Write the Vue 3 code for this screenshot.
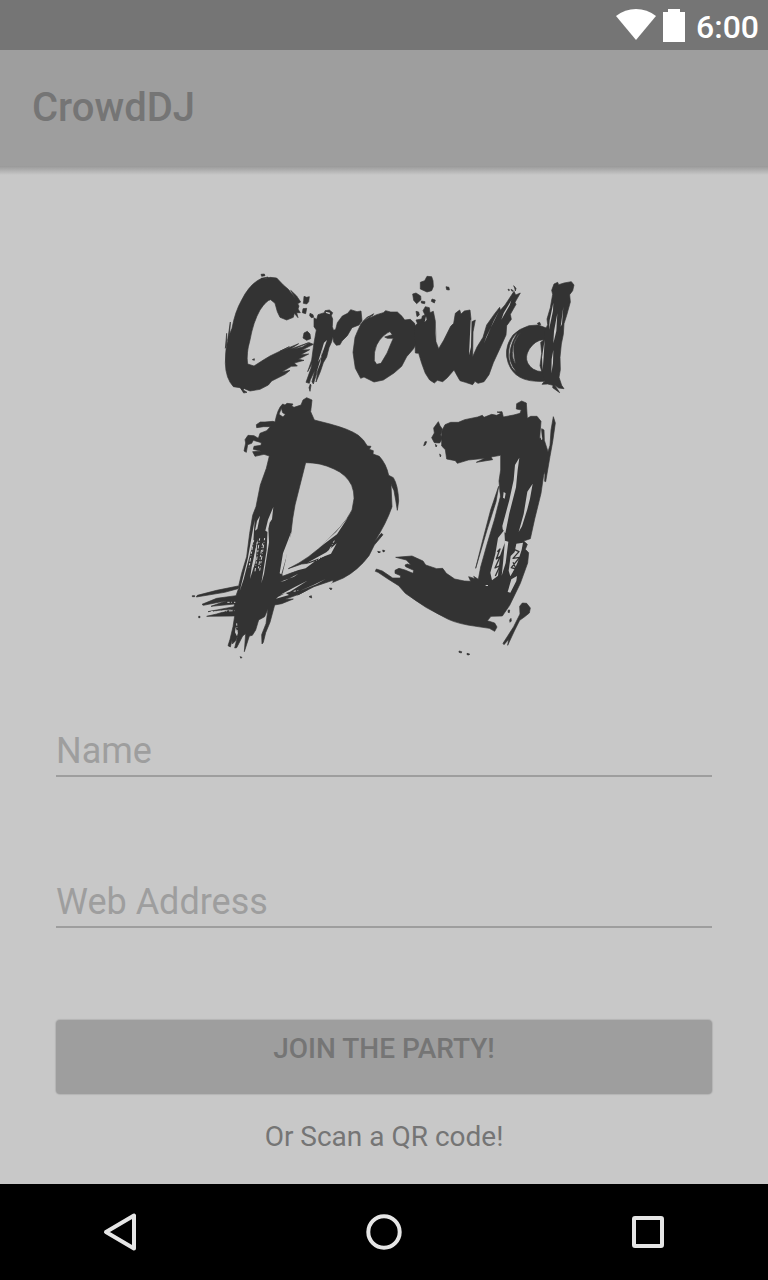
<script setup>
import { ref } from 'vue'

const name = ref('')
const address = ref('')
</script>

<template>
  <div class="screen">
    <div class="status">
      <svg class="wifi" viewBox="0 0 40 32" aria-hidden="true"><path d="M0 7Q9 0 20 0T40 7L20 31Z" /></svg>
      <svg class="battery" viewBox="0 0 22 34" aria-hidden="true"><path d="M5 1H17V4H22V34H0V4H5Z" /></svg>
      <time>6:00</time>
    </div>
    <header class="bar"><h1>CrowdDJ</h1></header>

    <main>
      <svg class="logo" viewBox="567 810 1170 1170" role="img" aria-label="Crowd DJ">
        <g transform="translate(540 780)">
          <path d="M362 126L350 108 332 91 345 113 325 88 310 75 290 54 270 52 258 57 245 55 232 62Q205 80 185 120 165 155 156 205L148 225Q134 270 136 310 137 355 160 380L180 383 187 391 193 386 210 393 240 388 265 375 275 363 315 343 330 331 305 336 334 319 352 318 343 309 372 301 355 298 386 282 362 284 389 269 366 270 400 253 388 248 367 261 340 268 386 248 330 268 356 251 300 274 328 260 270 288 250 300 222 318 203 312Q198 280 210 240 220 185 240 150 260 120 272 119L285 130 292 155 300 172 320 180 340 172 343 160 354 173 350 158 361 158 354 147 357 138 353 131Z" />
          <path d="M243 43l10-1 2 5-10 2zM244 55l20-4 2 4-20 2zM372 109l8 3 8-2-2 15-6 7-10-2 1-8zM369 146l11-1-3 16-10-3zM390 160l9 4 2 8-7 1-5-6zM372 219l10-5 8 8 2 14-12 5-11-7zM151 186l-8 55 3 3 4-38zM140 220l-4 45 4-10zM183 386l18 11-10 2zM217 299l6-3 0 5z" />
          <path d="M402 174L410 178 414 164 433 158 435 152 448 150 458 158 454 167 458 177 457 200 462 215 455 245 447 263 440 291 430 308 421 335 408 366 415 325 400 372 396 365 405 330 391 359 388 370 378 367 393 325 397 309 383 335 395 300 401 255 409 210 402 200ZM456 214L467 208 472 188 487 168 503 160 512 149 531 155 543 153 546 182 537 195 516 203 502 227 486 243 480 254 469 256 461 246ZM387 383l4-11 2 4-3 18z" />
          <path class="light" d="M441 240L432 248 414 306 423 291ZM437 155l13 3-1 5-11-4ZM429 258l-8 52-13 33 14-46Z" />
          <path fill-rule="evenodd" d="M543 191L555 178 581 161 567 175 590 164 610 158 617 152 632 156 652 156 666 169 674 180 691 178 704 190 710 215 710 250 700 267 680 290 665 319 642 339 610 360 582 366 552 351 542 355 526 325 523 305 519 277 525 232 532 215ZM640 210Q605 223 590 255 581 275 583 302L590 313 603 310Q624 279 634 248L640 235 622 235 614 231 637 224 630 215ZM547 188l15-17 18-7-25 17z" />
        </g>
        <g transform="translate(1140 780)">
          <path d="M104 200L112 190 108 180 125 177 127 168 135 165 129 152 136 140 148 143 150 158 160 154 166 184 168 245 176 266 191 241 212 199 221 190 226 160 239 150 243 162 253 153 270 150 274 186 286 180 279 216 278 290 291 261 309 232 320 195 344 161 359 142 361 151 375 135 402 94 407 105 421 99 405 127 408 133 391 163 394 178 380 197 378 225 359 267 340 308 327 344 312 365 294 370 285 364 278 374 256 367 240 362 233 350 222 330 202 353 188 365 172 361 163 369 149 360 136 340 125 310 116 280 106 279Z" />
          <path d="M121 67l13-5 7-13 14 1 4 12 1 18-5 12-14 4-20-9zM98 102l10-3 14 9 1 11-13 12-9-10zM124 123l11 2-1 6-10-2zM156 117l10 3-3 9-9-5zM198 80l9 2 1 8-8-1zM108 154l8 2 2 9-7 5zM384 87l5 3-3 2zM401 77l7 8-2 8-2-9zM393 88l7 4-4 2zM472 190l7-3 3 7-6 1z" />
          <path class="light" d="M165 180l5 65 4 18-6-25zM272 180l3-2-2 83-6 25zM357 153l-37 75-8 22 30-69zM394 121l-23 38-7 20 25-43zM138 169l-4 17 6-7z" />
          <path fill-rule="evenodd" d="M501 205L475 195 447 197Q417 206 399 225 376 255 380 290 387 334 420 352 445 366 492 364L512 340 518 220ZM490 239Q465 241 448 267 434 290 443 309 457 334 486 335ZM409 220Q380 253 387 298 393 329 409 335 397 322 391 302 384 266 410 222ZM424 216Q397 239 397 278 397 297 407 313 399 273 402 254 408 233 424 216Z" />
          <path d="M522 72L533 67 536 74 552 69 574 65 582 75 578 92 569 104 571 126 560 166 552 191 550 223 544 252 540 292 541 329 537 352 545 376 552 386 536 384 524 375 539 398 518 383 519 376 503 372 486 373 494 363 486 337 480 317 485 280 482 247 492 240 493 216 503 194 501 177 511 143 518 103 515 91Z" />
          <path class="light" d="M520 128l-11 53-2 28 12-57zM532 160l-10 54-2 36 9-37zM494 239l-8 53 2 38 3-40zM550 140l-8 60 4-8zM520 270l-5 28-1 42 5-30z" />
        </g>
        <g transform="translate(540 1170)">
          <path fill-rule="evenodd" d="M268 198L259 235 241 285 228 350 218 376 209 430 200 500 185 550 174 596 134 607 49 621 52 616 110 601 174 588 176 595 168 617 110 625 66 643 70 646 140 632 93 649 164 642 162 650 84 665 163 656 110 672 80 679 164 678 159 710 150 748 144 767 151 771 156 750 157 762 167 752 173 737 164 774 170 773 188 738 197 731 193 785 208 738 217 736 227 720 236 690 254 680 264 656 258 701 245 734 246 762 250 757 257 728 270 697 284 645 305 641 340 627 315 628 359 612 384 598 353 615 402 590 461 570 454 579 490 564Q535 540 567 497L583 465 609 434 604 430 583 456Q620 398 636 350L633 283 642 302 647 330 652 361 656 333Q654 285 640 263L626 256Q619 222 598 199L579 192 580 182 568 178 573 169 562 168 550 150 535 136Q510 118 450 102L403 90 392 65 396 30 380 23 369 30 363 45 342 52 335 48 339 42 321 40 315 45 308 42Q293 55 285 96L279 94 255 96 241 96 229 104 230 113 251 110 271 110 260 122 240 130 235 145 222 137 204 136 195 149 197 159 192 183 199 187 203 164 215 160 220 151 244 158 243 166 222 169 220 178 244 184 218 185 225 199 252 193ZM377 218Q420 217 462 237 499 253 515 286 523 306 522 326L516 360Q504 386 478 414L441 452Q390 505 325 536L365 522 390 520 347 544 307 559 306 552 316 510 321 470 333 428 338 386 345 345ZM304 55l-7 18 12 8 7-8-8-5z" />
          <path class="light" d="M224 390L203 507 179 603 191 568 220 455ZM240 377l-9 16-6 29 7-5zM280 351l-16 38-8 33 7 4 6-28 7-10zM264 390l-4 90-16 100 8-28 15-95zM233 447l-18 85-5 35 17-55zM334 425l-25 65-10 60 5 3 15-51zM503 384l-35 42-60 54 63-47zM470 460l-31 27-57 31 71-27zM405 514l-43 14-57 25 72-18zM355 551l-42 22-12 2 41-15zM382 572l-52 33-29 9 45-24zM437 567l-37 18-41 18 50-20zM317 609l-22 11-7 6 39-11zM167 711l6 20-2 8-6-12z" />
          <path class="grain" d="M221 450l-14 82M232 455l-12 77M239 445l-14 99M248 460l-13 75M254 444l-15 98M463 452l-20 38-35 22M170 700l2 32M459 575l-69 38M142 637h24M92 665l71-3M341 604l19-4" />
          <path d="M37 617h7v3h-7zM56 679h4v4h-4zM593 484l5 1-2 4zM608 480l6 2-4 4zM180 800l6 2-3 3zM448 594l8 1-3 5zM387 620l7-3 1 7z" />
        </g>
        <g transform="translate(1110 1170)">
          <path d="M215 124L225 104 242 97 265 97 284 89 323 81 337 76 342 82 365 73 380 76 393 70 381 66 396 65 400 81 431 75 450 70 454 60 439 57 440 41 455 33 469 39 472 85 482 79 501 79 513 94 509 145 514 145 515 116 522 120 523 151 534 185 540 166 543 120 550 80 556 99 548 155 540 199 527 275 524 274 525 246 521 255 513 310 494 387 481 446 461 453 472 463 466 478 476 488 473 519 451 580 419 646 397 678 363 679 352 692 374 699 381 711 374 724 358 715 318 709Q265 702 235 688 165 655 106 610L86 587 54 567 24 547 16 544 19 537 37 543 68 564 91 564 92 557 75 550 75 541 87 535 105 540 129 550 131 541 107 530 105 525 112 522 123 525 109 510 77 502 126 498 159 513 167 525 200 536 218 535 229 550 254 567 283 573 302 574 296 560 315 566 311 559 325 568 332 531 352 460 374 387 391 320 387 273 392 240 392 196 363 201 368 209 319 217 345 205 295 210 262 220 256 212 230 207 226 179 215 168Z" />
          <path d="M205 95l5 12 7 10-5 18 6 8-9 16-16-1-8-15 8-14-2-15zM165 155h5l-4 10-5 2zM196 163l5 4-3 4zM209 192l4 4-2 5z" />
          <path d="M386 289L378 335 351 420 317 535 337 455 362 360ZM449 649L457 639 470 640 481 654 478 669 463 681 449 691 433 723 413 766 416 748 402 764 399 760 431 710 450 672ZM415 660h4l-1 8-4-1zM419 690l4-5 1 8-4 4zM267 783l8 2-1 4-7-2zM291 790l8 2-2 3-6-1zM26 486l5-1-2 4zM39 482l5 1-4 3z" />
          <path class="light" d="M448 203L435 225 431 270 418 330 397 408 398 418 406 430 418 370 438 292 443 240ZM488 281L472 305 461 372 446 426 456 409 472 358 480 326ZM401 306l6 4-3 16-5-3zM385 318l5-12-1 10-4 24zM513 150l4-2-3-28zM359 390l-25 104-18 58 16-48zM384 444l-8 48-15 56 5 23 18-14 6-60 15-40-2-37zM405 452l10 3-8 64-12 38 4-38zM439 461l-5 25-12 12-6 44 5 17 13-22 9-20 12-38 4-21zM424 568l-11 38 8 2 18-35 2-15zM347 585h7v3h-7z" />
          <path class="ink" d="M382 485l8-8-11 30 12-8-16 35 15-7-14 31M432 478l15 7-18 20 20-3-25 31 13 4M429 517l8 17-9 22" />
        </g>
      </svg>

      <form @submit.prevent>
        <input v-model="name" type="text" placeholder="Name" aria-label="Name" />
        <input v-model="address" type="text" placeholder="Web Address" aria-label="Web Address" />
        <button class="join" type="submit">JOIN THE PARTY!</button>
      </form>
      <a class="scan" href="#scan">Or Scan a QR code!</a>
    </main>

    <nav>
      <button type="button" aria-label="Back"><svg viewBox="0 0 48 48"><path d="M38 7.500V40.500L10 24Z" /></svg></button>
      <button type="button" aria-label="Home"><svg viewBox="0 0 48 48"><circle cx="24" cy="24" r="15.700" /></svg></button>
      <button type="button" aria-label="Recent apps"><svg viewBox="0 0 48 48"><rect x="10" y="10" width="28" height="28" rx="1" /></svg></button>
    </nav>
  </div>
</template>

<style>
body { margin: 0; background: #c8c8c8; }
</style>

<style scoped>
.screen {
  display: flex;
  flex-direction: column;
  min-height: 100vh;
  background: #c8c8c8;
  font-family: Roboto, "Liberation Sans", sans-serif;
  color: #757575;
}
.status {
  display: flex;
  align-items: center;
  justify-content: flex-end;
  height: 50px;
  padding-right: 9px;
  background: #757575;
  color: #fff;
}
.status svg { display: block; fill: #fff; }
.wifi { width: 40px; height: 32px; margin-right: 7px; }
.battery { width: 22px; height: 34px; margin-right: 11px; }
time { font-size: 32px; line-height: 46px; font-weight: 500; padding-top: 4px; }
.bar {
  display: flex;
  align-items: center;
  height: 116px;
  padding: 0 32px;
  background: #9e9e9e;
}
.bar::after { content: none; }
h1 { margin: 0; font-size: 40px; line-height: 48px; font-weight: 500; }
main {
  flex: 1;
  display: flex;
  flex-direction: column;
  align-items: center;
  padding: 104px 56px 0;
  background: linear-gradient(#999, #c8c8c8 9px);
}
.logo { display: block; width: 390px; height: 390px; fill: #333; stroke: #333; stroke-width: 2; stroke-linejoin: round; }
.light { fill: #c8c8c8; stroke: none; }
.grain { fill: none; stroke: #c8c8c8; stroke-width: 3; stroke-dasharray: 7 5 2 6 11 4; }
.ink { fill: none; stroke: #333; stroke-width: 4; }
form { display: flex; flex-direction: column; align-self: stretch; margin-top: 61px; }
input {
  box-sizing: border-box;
  width: 100%;
  height: 56px;
  margin: 0 0 95px;
  padding: 6px 0 0;
  border: 0;
  border-bottom: 2px solid #9e9e9e;
  border-radius: 0;
  background: transparent;
  color: #757575;
  font: 400 36px/48px Roboto, "Liberation Sans", sans-serif;
  outline: none;
}
input::placeholder { color: #9e9e9e; opacity: 1; }
input:last-of-type { margin-bottom: 92px; }
.join {
  height: 74px;
  padding: 0 0 16px;
  border: 0;
  border-radius: 4px;
  background: #9e9e9e;
  box-shadow: 0 0 1px 1px #b4b4b4;
  color: #757575;
  font: 500 28px/32px Roboto, "Liberation Sans", sans-serif;
}
.scan { margin-top: 27px; font-size: 28px; line-height: 32px; color: #757575; text-decoration: none; }
nav {
  display: flex;
  justify-content: space-between;
  align-items: center;
  height: 96px;
  padding: 0 72px;
  background: #000;
}
nav button { width: 96px; height: 96px; padding: 0 24px; border: 0; background: none; }
nav svg { display: block; width: 48px; height: 48px; fill: none; stroke: #e6e6e6; stroke-width: 4; stroke-linejoin: round; }
</style>
